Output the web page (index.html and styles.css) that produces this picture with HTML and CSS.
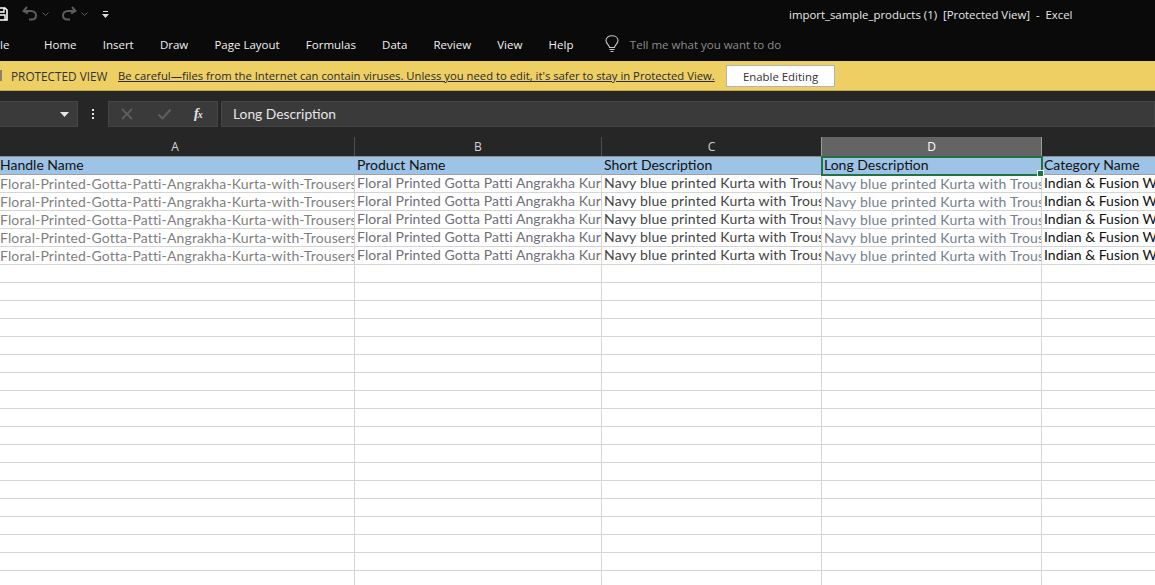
FILE: index.html
```html
<!DOCTYPE html>
<html lang="en">
<head>
    <meta charset="UTF-8">
    <title>import_sample_products (1) [Protected View] - Excel</title>
    <link rel="stylesheet" href="styles.css">
</head>
<body>
    <div class="titlebar">
        <div class="quick">
            <svg class="save-icon" width="8" height="14" viewBox="0 0 8 14"><path d="M-6 1H5L7 3V13H-6Z" fill="none" stroke="#fff" stroke-width="1.6"/><path d="M-3 1V5H4V1M-3 13V8H5V13" fill="none" stroke="#fff" stroke-width="1.4"/></svg>
            <svg class="undo" width="16" height="15" viewBox="0 0 16 15"><path d="M5 1L1.5 5L6 7.5M2 5H9C12 5 14 7 14 9.5C14 12 12 13.5 9.5 13.5H7" fill="none" stroke="#5c5c5c" stroke-width="2"/></svg>
            <svg class="caret" width="7" height="4" viewBox="0 0 7 4"><path d="M.5 .5L3.5 3.5L6.5 .5" fill="none" stroke="#5c5c5c"/></svg>
            <svg class="redo" width="16" height="15" viewBox="0 0 16 15"><path d="M11 1L14.500 5L10 7.500M14 5H7C4 5 2 7 2 9.500C2 12 4 13.500 6.500 13.500H9" fill="none" stroke="#5c5c5c" stroke-width="2"/></svg>
            <svg class="caret" width="7" height="4" viewBox="0 0 7 4"><path d="M.5 .5L3.5 3.500L6.500 .5" fill="none" stroke="#5c5c5c"/></svg>
            <svg class="customize" width="7" height="8" viewBox="0 0 7 8"><path d="M1 .5H6" stroke="#ddd"/><path d="M0 3H7L3.500 7Z" fill="#ddd"/></svg>
        </div>
        <div class="doc-title">import_sample_products (1)&nbsp; [Protected View]&nbsp; -&nbsp; Excel</div>
    </div>

    <div class="ribbon-tabs">
        <span class="tab file-tab">le</span>
        <span class="tab">Home</span>
        <span class="tab">Insert</span>
        <span class="tab">Draw</span>
        <span class="tab">Page Layout</span>
        <span class="tab">Formulas</span>
        <span class="tab">Data</span>
        <span class="tab">Review</span>
        <span class="tab">View</span>
        <span class="tab">Help</span>
        <svg class="bulb" width="14" height="18" viewBox="0 0 14 18"><path d="M4.500 12.500C4.500 10 1 9 1 5.500C1 2.800 3.500 .8 7 .8C10.500 .8 13 2.800 13 5.500C13 9 9.500 10 9.500 12.500Z" fill="none" stroke="#c8c8c8" stroke-width="1.100"/><path d="M4.500 14.500H9.500M5.500 16.500H8.500" stroke="#c8c8c8" stroke-width="1.100"/></svg>
        <span class="tell-me">Tell me what you want to do</span>
    </div>

    <div class="protected-bar">
        <span class="shield"></span>
        <span class="protected-label">PROTECTED VIEW</span>
        <a class="protected-link">Be careful—files from the Internet can contain viruses. Unless you need to edit, it's safer to stay in Protected View.</a>
        <button class="enable-btn">Enable Editing</button>
    </div>

    <div class="formula-bar">
        <div class="name-box"><svg width="9" height="5" viewBox="0 0 9 5"><path d="M0 0H9L4.500 5Z" fill="#e6e6e6"/></svg></div>
        <div class="grip"><i></i><i></i><i></i></div>
        <div class="fx-box">
            <svg width="14" height="14" viewBox="0 0 14 14"><path d="M2 2L12 12M12 2L2 12" stroke="#5e5e5e" stroke-width="1.800"/></svg>
            <svg width="15" height="14" viewBox="0 0 15 14"><path d="M1.500 7.500L5.500 11.500L13.500 2.500" fill="none" stroke="#5e5e5e" stroke-width="2.200"/></svg>
            <span class="fx">f<sub>x</sub></span>
        </div>
        <div class="formula-input">Long Description</div>
    </div>

    <div class="col-heads">
        <div class="col-head col-a">A</div>
        <div class="col-head col-b">B</div>
        <div class="col-head col-c">C</div>
        <div class="col-head col-d selected">D</div>
        <div class="col-head col-e"></div>
    </div>

    <table class="sheet">
        <colgroup>
            <col class="col-a"><col class="col-b"><col class="col-c"><col class="col-d"><col class="col-e">
        </colgroup>
        <tr class="head-row">
            <td>Handle Name</td><td>Product Name</td><td>Short Description</td><td class="active-cell">Long Description<span class="fill-handle"></span></td><td>Category Name</td>
        </tr>
        <tr class="data-row"><td class="handle">Floral-Printed-Gotta-Patti-Angrakha-Kurta-with-Trousers</td><td class="product">Floral Printed Gotta Patti Angrakha Kurta</td><td class="short">Navy blue printed Kurta with Trousers</td><td class="long">Navy blue printed Kurta with Trousers</td><td class="cat">Indian &amp; Fusion Wear</td></tr>
        <tr class="data-row"><td class="handle">Floral-Printed-Gotta-Patti-Angrakha-Kurta-with-Trousers</td><td class="product">Floral Printed Gotta Patti Angrakha Kurta</td><td class="short">Navy blue printed Kurta with Trousers</td><td class="long">Navy blue printed Kurta with Trousers</td><td class="cat">Indian &amp; Fusion Wear</td></tr>
        <tr class="data-row"><td class="handle">Floral-Printed-Gotta-Patti-Angrakha-Kurta-with-Trousers</td><td class="product">Floral Printed Gotta Patti Angrakha Kurta</td><td class="short">Navy blue printed Kurta with Trousers</td><td class="long">Navy blue printed Kurta with Trousers</td><td class="cat">Indian &amp; Fusion Wear</td></tr>
        <tr class="data-row"><td class="handle">Floral-Printed-Gotta-Patti-Angrakha-Kurta-with-Trousers</td><td class="product">Floral Printed Gotta Patti Angrakha Kurta</td><td class="short">Navy blue printed Kurta with Trousers</td><td class="long">Navy blue printed Kurta with Trousers</td><td class="cat">Indian &amp; Fusion Wear</td></tr>
        <tr class="data-row"><td class="handle">Floral-Printed-Gotta-Patti-Angrakha-Kurta-with-Trousers</td><td class="product">Floral Printed Gotta Patti Angrakha Kurta</td><td class="short">Navy blue printed Kurta with Trousers</td><td class="long">Navy blue printed Kurta with Trousers</td><td class="cat">Indian &amp; Fusion Wear</td></tr>
        <tr><td></td><td></td><td></td><td></td><td></td></tr>
        <tr><td></td><td></td><td></td><td></td><td></td></tr>
        <tr><td></td><td></td><td></td><td></td><td></td></tr>
        <tr><td></td><td></td><td></td><td></td><td></td></tr>
        <tr><td></td><td></td><td></td><td></td><td></td></tr>
        <tr><td></td><td></td><td></td><td></td><td></td></tr>
        <tr><td></td><td></td><td></td><td></td><td></td></tr>
        <tr><td></td><td></td><td></td><td></td><td></td></tr>
        <tr><td></td><td></td><td></td><td></td><td></td></tr>
        <tr><td></td><td></td><td></td><td></td><td></td></tr>
        <tr><td></td><td></td><td></td><td></td><td></td></tr>
        <tr><td></td><td></td><td></td><td></td><td></td></tr>
        <tr><td></td><td></td><td></td><td></td><td></td></tr>
        <tr><td></td><td></td><td></td><td></td><td></td></tr>
        <tr><td></td><td></td><td></td><td></td><td></td></tr>
        <tr><td></td><td></td><td></td><td></td><td></td></tr>
        <tr><td></td><td></td><td></td><td></td><td></td></tr>
        <tr><td></td><td></td><td></td><td></td><td></td></tr>
    </table>
</body>
</html>
```

FILE: styles.css
```css
html, body {
    margin: 0;
    height: 585px;
    overflow: hidden;
    background-color: #fff;
}
body {
    font-family: "Open Sans", "Noto Sans", sans-serif;
    font-size: 12px;
}
.titlebar {
    height: 28px;
    background-color: #0a0a0a;
    display: flex;
    align-items: center;
    color: #e8e8e8;
}
.quick {
    display: flex;
    align-items: center;
    width: 789px;
    height: 100%;
}
.undo { margin-left: 14px; margin-top: -2px; }
.redo { margin-left: 12px; margin-top: -2px; }
.caret { margin-left: 4px; }
.customize { margin-left: 14px; margin-top: 1px; }
.doc-title {
    font-size: 11.400px;
    white-space: nowrap;
}
.ribbon-tabs {
    height: 33px;
    background-color: #0a0a0a;
    display: flex;
    align-items: center;
    gap: 26.200px;
    color: #f0f0f0;
    white-space: nowrap;
    overflow: hidden;
}
.tab {
    font-size: 11.500px;
    margin-top: -1px;
}
.file-tab {
    width: 9px;
    margin-right: 8.800px;
}
.bulb {
    margin-left: 5px;
    margin-right: -15px;
    margin-top: -1px;
}
.tell-me {
    color: #8c8c8c;
    font-size: 11.500px;
    margin-top: -1px;
}
.protected-bar {
    height: 29px;
    background-color: #eecf63;
    border-bottom: 1px solid #c4a850;
    display: flex;
    align-items: center;
    white-space: nowrap;
    color: #333;
}
.shield {
    width: 2px;
    height: 11px;
    background-color: #8f8060;
    margin-right: 9px;
}
.protected-label {
    font-size: 11.800px;
    width: 107px;
}
.protected-link {
    font-size: 11.270px;
    width: 608px;
    text-decoration: underline;
    color: #2b2b2b;
}
.enable-btn {
    width: 109px;
    height: 22px;
    background-color: #fff;
    border: 1px solid #b3b3b3;
    font-family: inherit;
    font-size: 11.400px;
    color: #333;
    padding: 0;
    margin-top: 1px;
}
.formula-bar {
    height: 46px;
    background-color: #262626;
    box-sizing: border-box;
    padding-top: 10px;
    display: flex;
    align-items: flex-start;
}
.name-box {
    width: 78px;
    height: 26px;
    box-sizing: border-box;
    background-color: #3a3a3a;
    border: 1px solid #454545;
    border-left: none;
    display: flex;
    align-items: center;
    justify-content: flex-end;
    padding-right: 8px;
}
.grip {
    width: 30px;
    height: 26px;
    display: flex;
    flex-direction: column;
    align-items: center;
    justify-content: center;
    gap: 2px;
}
.grip i {
    width: 2px;
    height: 2px;
    background-color: #e6e6e6;
}
.fx-box {
    width: 110px;
    height: 26px;
    box-sizing: border-box;
    background-color: #3a3a3a;
    border: 1px solid #454545;
    display: flex;
    align-items: center;
    gap: 23px;
    padding-left: 11px;
}
.fx {
    font-family: "Liberation Serif", serif;
    font-style: italic;
    font-weight: bold;
    font-size: 14px;
    color: #e6e6e6;
    margin-left: -1px;
    line-height: 1;
}
.fx sub {
    font-size: 10px;
    vertical-align: baseline;
    margin-left: -1px;
}
.formula-input {
    flex: 1;
    height: 26px;
    margin-left: 3px;
    box-sizing: border-box;
    background-color: #3a3a3a;
    border: 1px solid #454545;
    color: #e6e6e6;
    font-family: Lato, sans-serif;
    font-size: 13.800px;
    line-height: 23px;
    padding-left: 11px;
}
.col-heads {
    height: 19px;
    background-color: #262626;
    display: flex;
    border-bottom: 1px solid #8c8c8c;
}
.col-head {
    box-sizing: border-box;
    border-right: 1px solid #4f4f4f;
    color: #d4d4d4;
    text-align: center;
    font-size: 12px;
    line-height: 20px;
}
.col-head.col-a {
    padding-right: 4px;
}
.col-head.selected {
    background-color: #646464;
    color: #fff;
    border-left: 1px solid #9c9c9c;
    border-right: 1px solid #9c9c9c;
    margin-left: -1px;
    width: 221px;
}
.col-a { width: 355px; }
.col-b { width: 247px; }
.col-c { width: 220px; }
.col-d { width: 220px; }
.col-e { width: 113px; border-right: none; }
.sheet {
    table-layout: fixed;
    border-collapse: separate;
    border-spacing: 0;
    width: 1155px;
    font-family: Lato, sans-serif;
    font-size: 14px;
    color: #000;
}
.sheet td {
    height: 16px;
    padding: 0 0 1px 2px;
    border-right: 1px solid #d4d4d4;
    border-bottom: 1px solid #d4d4d4;
    white-space: nowrap;
    overflow: hidden;
    line-height: 16px;
}
.sheet td:first-child {
    padding-left: 0;
}
.sheet td:last-child {
    border-right: none;
}
.head-row td {
    background-color: #9dc3e6;
    border-right-color: #9dc3e6;
    border-bottom-color: #a0a0a0;
    color: #111;
}
.sheet .active-cell {
    position: relative;
    overflow: visible;
    outline: 2px solid #217346;
    outline-offset: -1px;
}
.fill-handle {
    position: absolute;
    right: -3px;
    bottom: -3px;
    width: 5px;
    height: 5px;
    background-color: #217346;
    border: 1px solid #fff;
}
.sheet td.handle,
.sheet td.long {
    padding-top: 1px;
    padding-bottom: 0;
}
.handle { color: #7f7f7f; letter-spacing: .14px; }
.product { color: #6f6f78; letter-spacing: .1px; }
.short { color: #444; letter-spacing: .2px; }
.long { color: #76808c; letter-spacing: .2px; }
.cat { color: #111; }
```
